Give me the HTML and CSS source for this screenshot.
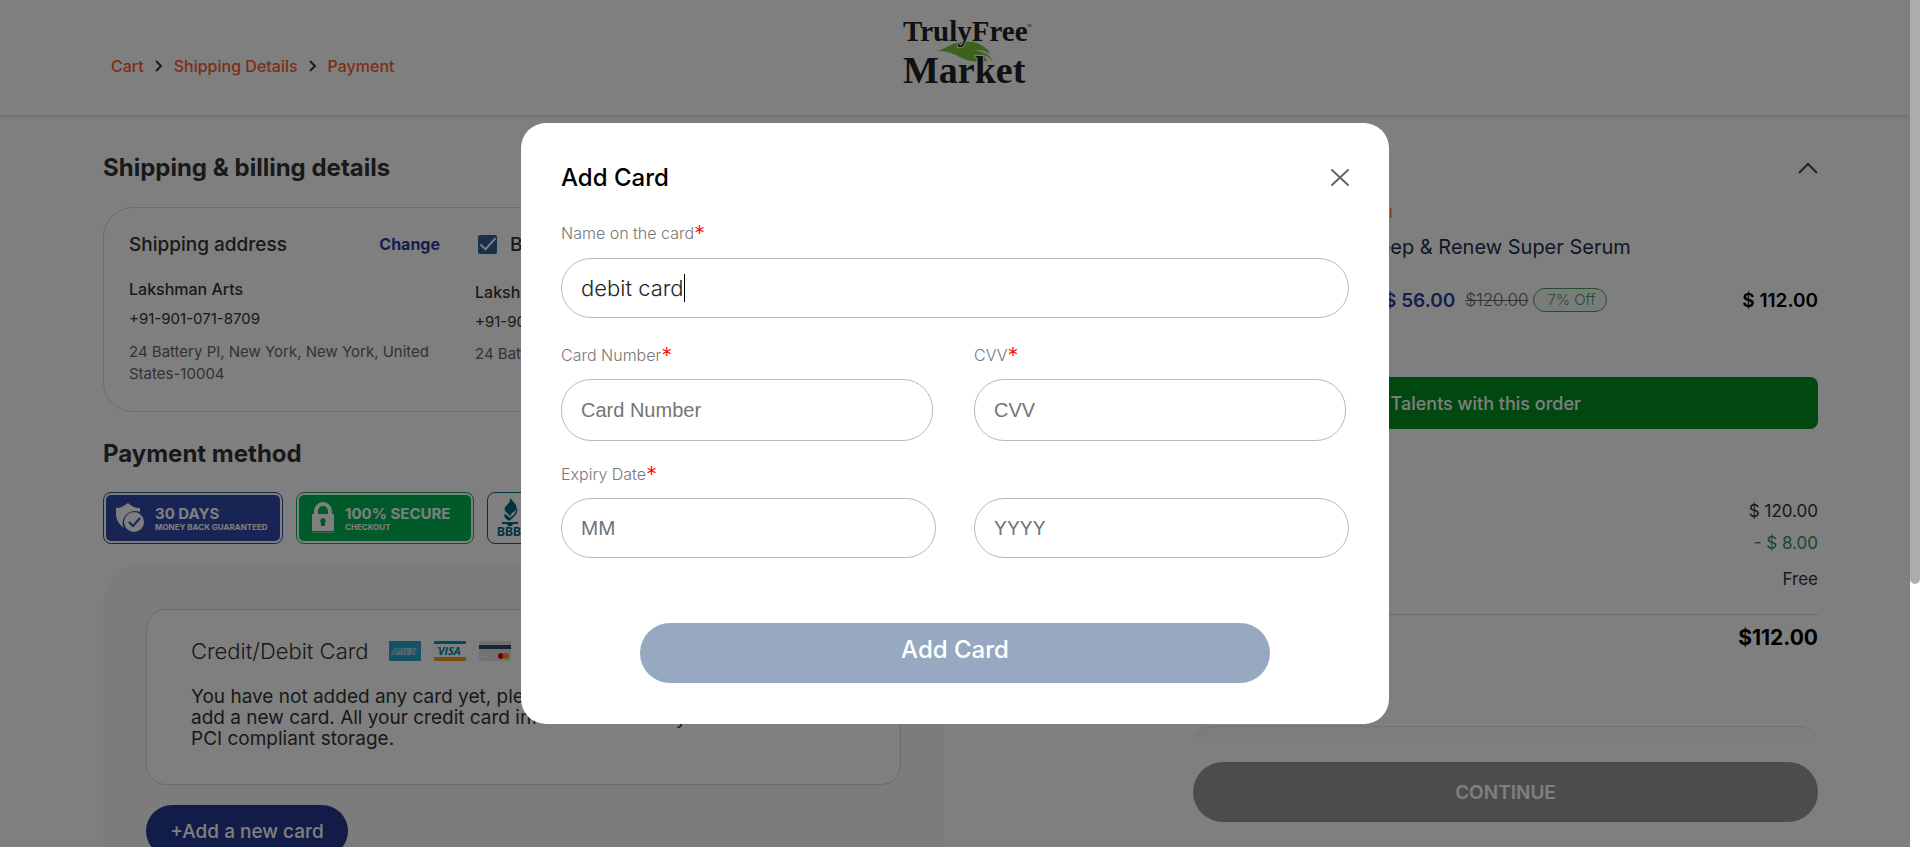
FILE: index.html
```html
<!DOCTYPE html>
<html lang="en">
<head>
<meta charset="utf-8">
<title>TrulyFree Market - Payment</title>
<link rel="stylesheet" href="styles.css">
</head>
<body>
<div class="viewport">
  <div class="page">
    <header class="site-header">
      <nav class="breadcrumbs" aria-label="Breadcrumb">
        <a href="#">Cart</a>
        <svg width="8" height="12" viewBox="0 0 8 12"><path d="M1 1l5 5-5 5" fill="none" stroke="#3a2f66" stroke-width="2"/></svg>
        <a href="#">Shipping Details</a>
        <svg width="8" height="12" viewBox="0 0 8 12"><path d="M1 1l5 5-5 5" fill="none" stroke="#3a2f66" stroke-width="2"/></svg>
        <a href="#">Payment</a>
      </nav>
      <a class="logo" href="#" aria-label="TrulyFree Market">
        <svg width="130" height="70" viewBox="0 -2 130 70">
          <path d="M34 32C42 31 46 26 54 24C61 22 70 22 77 25C83 28 87 31 88 35C83 31 78 31 73 31C81 33 88 35 91 43C88 39 85 37 82 36C83 39 85 40 85 42C78 43 71 43 65 41C56 38 49 31 34 32Z" fill="#7cc238"/>
          <text class="logo-text" x="1" y="22" font-size="29">TrulyFree</text>
          <text class="logo-text" x="1" y="64" font-size="38">Market</text>
          <text x="125" y="8" font-size="3" font-family="Liberation Sans, sans-serif" fill="#222">TM</text>
        </svg>
      </a>
    </header>

    <main class="checkout">
      <section class="details">
        <h2 class="section-title">Shipping &amp; billing details</h2>
        <div class="address-box">
          <div class="address">
            <div class="address-head">
              <h3>Shipping address</h3>
              <a class="change" href="#">Change</a>
            </div>
            <p class="name">Lakshman Arts</p>
            <p class="phone">+91-901-071-8709</p>
            <p class="street">24 Battery PI, New York, New York, United States-10004</p>
          </div>
          <div class="address billing">
            <div class="address-head">
              <label class="same"><input type="checkbox" checked><span>Billing address</span></label>
            </div>
            <p class="name">Lakshman Arts</p>
            <p class="phone">+91-901-071-8709</p>
            <p class="street">24 Battery PI, New York, New York</p>
          </div>
        </div>

        <h2 class="section-title method-title">Payment method</h2>
        <div class="badges">
          <div class="badge badge-blue"><div class="badge-fill">
            <svg width="28" height="30" viewBox="0 0 28 30">
              <path d="M12 0C15 3 19 5 24 5V9C16 6 8 11 7 18C6 21 7 23 8 25C3 21 0 17 0 11V5C5 5 8 3 12 0Z" fill="#fff"/>
              <circle cx="18" cy="19" r="10" fill="#fff"/>
              <path d="M13 19l4 4 7-8" fill="none" stroke="#304aa8" stroke-width="2"/>
            </svg>
            <div><strong>30 DAYS</strong><small>MONEY BACK GUARANTEED</small></div>
          </div></div>
          <div class="badge badge-green"><div class="badge-fill">
            <svg width="22" height="32" viewBox="0 0 22 32">
              <path d="M4 14V9a7 7 0 0 1 14 0V14" fill="none" stroke="#fff" stroke-width="4"/>
              <rect y="12" width="22" height="17" rx="1" fill="#fff"/>
              <path d="M11 16a3 3 0 0 1 2 5v3H9v-3a3 3 0 0 1 2-5Z" fill="#00b454"/>
              <rect y="30" width="22" height="1" fill="#fff" opacity=".4"/>
            </svg>
            <div><strong>100% SECURE</strong><small>CHECKOUT</small></div>
          </div></div>
          <div class="badge badge-bbb">
            <svg width="28" height="42" viewBox="0 0 28 42">
              <path d="M13 1C22 10 21 12 15 16C13 18 14 19 15 20C7 14 5 12 11 7C13 5 13 3 13 1ZM19 10C22 14 20 18 12 24L8 21L7 17C10 18 12 19 13 21C18 17 20 14 19 10ZM5 25H21V27H16L15 29H11L10 27H5Z" fill="#00687f"/>
              <text x="0" y="39" class="bbb-text">BBB</text>
            </svg>
          </div>
        </div>

        <div class="method-panel">
          <div class="method-card">
            <div class="method-head">
              <h3>Credit/Debit Card</h3>
              <div class="card-logos">
                <svg width="32" height="20" viewBox="0 0 32 20"><rect width="32" height="20" rx="1" fill="#2aa5d0"/><text x="3" y="13" font-size="8" font-weight="700" font-style="italic" font-family="Liberation Sans, sans-serif" fill="#2aa5d0" stroke="#fff" stroke-width="1" paint-order="stroke">AMEX</text></svg>
                <svg width="32" height="20" viewBox="0 0 32 20"><rect width="32" height="20" rx="1" fill="#fff"/><path d="M0 3V1a1 1 0 0 1 1-1H31a1 1 0 0 1 1 1V3Z" fill="#0097c4"/><path d="M0 16H32V19a1 1 0 0 1-1 1H1a1 1 0 0 1-1-1ZM2 6H5L6 9Z" fill="#f59a1c"/><text x="4" y="14" font-size="11" font-weight="700" font-style="italic" font-family="Open Sans, sans-serif" fill="#0085b0">VISA</text></svg>
                <svg width="32" height="20" viewBox="0 0 32 20"><rect width="32" height="20" rx="1" fill="#e4e4e4"/><rect y="4" width="32" height="4" fill="#34495e"/><path d="M3 12h7v1H3zM3 15h7v1H3z" fill="#fff"/><circle cx="22" cy="15" r="3" fill="#e6001f"/><circle cx="27" cy="15" r="3" fill="#f59a00"/></svg>
              </div>
            </div>
            <p>You have not added any card yet, please click the button<br>add a new card. All your credit card info is saved safely in<br>PCI compliant storage.</p>
          </div>
          <button class="add-new" type="button">+Add a new card</button>
        </div>
      </section>

      <aside class="order">
        <div class="order-scroll">
          <div class="order-head">
            <h2 class="section-title">Order</h2>
            <button class="toggle" type="button" aria-label="Collapse order"><svg width="20" height="14" viewBox="0 0 20 14"><path d="M1 12l9-9 9 9" fill="none" stroke="#444" stroke-width="2"/></svg></button>
          </div>
          <div class="product">
            <p class="vendor">Pearl</p>
            <p class="product-name">Sleep &amp; Renew Super Serum</p>
            <div class="price-row">
              <span class="price">$ 56.00</span>
              <s>$120.00</s>
              <span class="off">7% Off</span>
              <span class="line-total">$ 112.00</span>
            </div>
          </div>
          <div class="talents">Earn Talents with this order</div>
          <dl class="totals">
            <div><dt>Sub total</dt><dd>$ 120.00</dd></div>
            <div class="discount"><dt>Discount</dt><dd>- $ 8.00</dd></div>
            <div class="shipping"><dt>Shipping</dt><dd>Free</dd></div>
            <div class="grand"><dt>Total</dt><dd>$112.00</dd></div>
          </dl>
          <div class="note-box"></div>
        </div>
        <div class="order-footer"><button class="continue" type="button">CONTINUE</button></div>
      </aside>
    </main>
  </div>
  <div class="scroll-rail"><div class="scroll-thumb"></div></div>

  <div class="backdrop">
    <section class="modal" role="dialog" aria-modal="true" aria-labelledby="modal-title">
      <div class="modal-head">
        <h1 id="modal-title">Add Card</h1>
        <button class="close" type="button" aria-label="Close"><svg width="18" height="20" viewBox="0 0 18 20"><path d="M1 3l16 15M17 3L1 18" stroke="#666" stroke-width="2" stroke-linecap="round"/></svg></button>
      </div>
      <form>
        <div class="field name-field">
          <label for="card-name">Name on the card<b>*</b></label>
          <div class="caret-wrap"><input id="card-name" type="text" value="debit card"><i class="caret"></i></div>
        </div>
        <div class="field-row secure">
          <div class="field"><label for="card-number">Card Number<b>*</b></label><input id="card-number" type="text" placeholder="Card Number"></div>
          <div class="field"><label for="cvv">CVV<b>*</b></label><input id="cvv" type="text" placeholder="CVV"></div>
        </div>
        <div class="field-row expiry">
          <div class="field"><label for="month">Expiry Date<b>*</b></label><input id="month" type="text" placeholder="MM"></div>
          <div class="field"><input type="text" placeholder="YYYY" aria-label="Expiry year"></div>
        </div>
        <button class="submit" type="button">Add Card</button>
      </form>
    </section>
  </div>
</div>
</body>
</html>
```
FILE: styles.css
```css
* { box-sizing: border-box; }
body, h1, h2, h3, p, dl, dd { margin: 0; }
body { font-family: Inter, "Open Sans", sans-serif; color: #333; background: #fff; }
button, input { font-family: inherit; }
button { border: 0; cursor: pointer; }
a { text-decoration: none; }

.viewport { position: relative; display: grid; grid-template-columns: 1fr 10px; grid-template-rows: 100%; height: 100vh; overflow: hidden; }
.page { display: flex; flex-direction: column; min-height: 0; }
.scroll-rail { background: #fff; }
.scroll-thumb { height: 69%; background: #acacac; border-radius: 0 0 5px 5px; }

.site-header { display: grid; grid-template-columns: 1fr auto 1fr; height: 115px; padding: 17px 111px 0; box-shadow: 0 1px 5px rgba(0, 0, 0, .2); flex: none; }
.breadcrumbs { display: flex; align-items: center; gap: 11px; height: 98px; font-size: 16px; font-weight: 500; }
.breadcrumbs a { color: #ff582d; }
.logo { display: block; padding-left: 24px; }
.logo-text { font-family: "Liberation Serif", serif; font-weight: 700; fill: #222; stroke: #fff; stroke-width: 2px; paint-order: stroke; }

.checkout { flex: 1; min-height: 0; display: grid; grid-template-columns: 841fr 625fr; grid-template-rows: 100%; gap: 249px; padding: 0 92px 0 103px; }
.section-title { font-size: 24px; line-height: 32px; font-weight: 700; color: #333; }
.details { padding-top: 37px; }
.address-box { display: flex; gap: 35px; margin-top: 23px; padding: 24px 25px 26px; border: 1px solid #d8d8d8; border-radius: 30px; }
.address { width: 311px; }
.address-head { display: flex; justify-content: space-between; align-items: center; height: 24px; margin-bottom: 22px; }
.address-head h3, .same { font-size: 19px; font-weight: 500; color: #333; }
.change { font-size: 16px; font-weight: 700; color: #283e9a; }
.address p { font-size: 15px; line-height: 22px; }
.address .name { font-size: 16px; font-weight: 500; color: #333; }
.address .phone { margin-top: 8px; color: #333; }
.address .street { margin-top: 11px; color: #666; }
.billing .address-head { margin-bottom: 25px; }
.billing .street { margin-top: 10px; }
.same { display: flex; align-items: center; gap: 13px; padding-left: 3px; }
.same input { appearance: none; width: 19px; height: 19px; margin: 0; border-radius: 2px; background: #345e98; display: grid; place-items: center; }
.same input::after { content: ""; width: 14px; height: 6px; border: solid #fff; border-width: 0 0 2px 2px; transform: rotate(-48deg); margin-bottom: 4px; }

.method-title { margin-top: 26px; }
.badges { display: flex; gap: 13px; height: 52px; margin-top: 22px; }
.badge { border: 1px solid; border-radius: 8px; padding: 2px; }
.badge-fill { display: flex; align-items: center; height: 100%; border-radius: 5px; color: #fff; }
.badge-fill strong, .badge-fill small { display: block; font-weight: 700; }
.badge-fill strong { font-size: 15px; line-height: 18px; }
.badge-fill small { font-size: 8px; line-height: 9px; }
.badge-blue { width: 180px; border-color: #304aa8; }
.badge-blue .badge-fill { gap: 11px; padding-left: 10px; background: #304aa8; }
.badge-green { width: 178px; border-color: #00b454; }
.badge-green .badge-fill { gap: 11px; padding-left: 13px; background: #00b454; }
.badge-bbb { width: 110px; border-color: #00687f; padding: 4px 9px; }
.bbb-text { font: 700 12px Inter, sans-serif; fill: #00687f; }

.method-panel { margin-top: 20px; padding: 45px 43px; border-radius: 40px; background: #f8f8f8; }
.method-card { padding: 27px 44px 35px; border: 1px solid #d8d8d8; border-radius: 20px; background: #fff; }
.method-head { display: flex; gap: 20px; align-items: center; height: 28px; }
.method-head h3 { font-size: 22px; font-weight: 300; color: #333; }
.card-logos { display: flex; gap: 13px; }
.method-card p { margin-top: 21px; font-size: 19px; line-height: 21px; color: #333; }
.add-new { width: 202px; height: 52px; margin-top: 20px; padding: 0; border-radius: 26px; background: #233990; color: #fff; font-size: 19px; font-weight: 500; }

.order { display: flex; flex-direction: column; min-height: 0; }
.order-scroll { flex: 1; min-height: 0; overflow: hidden; padding-top: 37px; }
.order-head { display: flex; justify-content: space-between; align-items: center; height: 32px; }
.toggle { padding: 0; background: none; display: flex; }
.product { padding-left: 168px; }
.vendor { margin-top: 19px; font-size: 13px; line-height: 20px; color: #ff582d; }
.product-name { margin-top: 10px; font-size: 20px; line-height: 28px; color: #22304a; }
.price-row { display: flex; align-items: center; height: 24px; margin: 27px 0 0 23px; }
.price { font-size: 19px; font-weight: 600; color: #283e9a; }
.price-row s { margin-left: 10px; font-size: 17px; font-weight: 300; color: #666; }
.off { height: 24px; margin-left: 4px; padding: 0 10px 0 14px; border: 1px solid #4a9a58; border-radius: 12px; background: #f2fbf3; color: #4a9a58; font-size: 15px; font-weight: 300; line-height: 22px; }
.line-total { margin-left: auto; font-size: 19px; font-weight: 600; color: #000; }
.talents { display: flex; align-items: center; justify-content: flex-end; height: 52px; margin-top: 65px; padding-right: 237px; border-radius: 8px; background: #00901e; color: #fff; font-size: 18px; font-weight: 500; }
.totals { margin-top: 70px; font-size: 17px; line-height: 24px; color: #333; font-weight: 400; }
.totals div { display: flex; justify-content: space-between; }
.totals .discount { margin-top: 8px; }
.discount dd { color: #3f9150; }
.totals .shipping { margin-top: 12px; }
.totals .grand { margin-top: 23px; padding-top: 9px; border-top: 1px solid #d8d8d8; font-size: 21px; line-height: 28px; font-weight: 700; color: #000; }
.note-box { height: 80px; margin-top: 74px; border: 1px solid #e4e4e4; border-radius: 20px; background: #fafafa; }
.order-footer { padding: 25px 0; }
.continue { width: 100%; height: 60px; border-radius: 30px; background: #999; color: #fff; font-size: 19px; font-weight: 600; }

.backdrop { position: absolute; inset: 0 10px 0 0; display: flex; align-items: center; justify-content: center; background: rgba(0, 0, 0, .5); }
.modal { width: 868px; max-width: 94%; padding: 36px 40px 41px; border-radius: 25px; background: #fff; }
.modal-head { display: flex; justify-content: space-between; align-items: center; height: 36px; }
.modal-head h1 { font-size: 24px; font-weight: 500; color: #000; }
.close { display: flex; padding: 0; background: none; }
form { padding-top: 28px; }
.field { display: flex; flex-direction: column; }
.field label { display: flex; height: 20px; margin-bottom: 14px; font-size: 16px; line-height: 20px; font-weight: 300; color: #777; }
.field label b { font-size: 22px; font-weight: 300; color: #f00; }
.field input { width: 100%; height: 60px; padding: 0 19px; border: 1px solid #b9b9b9; border-radius: 30px; background: #fff; font-size: 20px; font-weight: 400; color: #212529; outline: 0; }
.name-field input { font-size: 22px; font-weight: 300; }
.caret-wrap { position: relative; margin-top: 1px; }
.caret { position: absolute; left: 123px; top: 16px; width: 1px; height: 28px; background: #000; }
.field-row { display: grid; grid-template-columns: 1fr 1fr; gap: 38px; align-items: end; }
.secure { margin-top: 27px; }
.secure .field { padding-right: 3px; }
.secure input { height: 62px; font-family: "Liberation Sans", sans-serif; }
.field input::placeholder { color: #6c757d; opacity: 1; }
.secure .field input::placeholder { color: #757575; }
.expiry { margin-top: 23px; }
.expiry input { font-size: 19px; }
.submit { display: block; width: 80%; height: 60px; margin: 65px auto 0; padding: 0 0 8px; border-radius: 30px; background: #96a9c1; color: #fff; font-size: 24px; font-weight: 500; }
```
